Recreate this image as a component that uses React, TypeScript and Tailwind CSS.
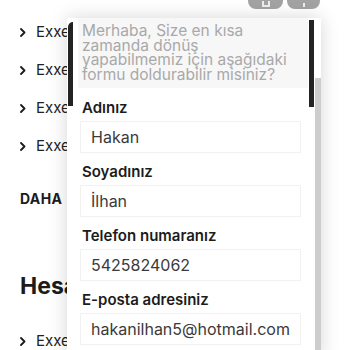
const menuItems = ['Exxen', 'Exxen', 'Exxen', 'Exxen'];

const fields = [
  { label: 'Adınız', value: 'Hakan' },
  { label: 'Soyadınız', value: 'İlhan' },
  { label: 'Telefon numaranız', value: '5425824062' },
  { label: 'E-posta adresiniz', value: 'hakanilhan5@hotmail.com' },
];

function Chevron() {
  return (
    <svg width="6" height="9" viewBox="0 0 6 9" fill="none" className="mr-[10px]">
      <path d="M1 1l3.5 3.5L1 8" stroke="#1c1c1c" strokeWidth="1.8" strokeLinecap="round" strokeLinejoin="round" />
    </svg>
  );
}

function MenuRow({ text }: { text: string }) {
  return (
    <div className="flex items-center h-[38px] text-[15px] text-[#222]">
      <Chevron />
      <span>{text}</span>
    </div>
  );
}

function Field({ label, value }: { label: string; value: string }) {
  return (
    <div className="flex flex-col mb-[9px]">
      <div className="h-[20px] leading-[20px] px-[2px] text-[15px] font-semibold text-[#1c1c1c]">{label}</div>
      <div className="mt-[3px] h-[32px] flex items-center pl-[10px] border border-[#f1f1f1] text-[16px] text-[#3a3a3a]">
        {value}
      </div>
    </div>
  );
}

export default function App() {
  return (
    <div className="relative w-[350px] h-[350px] overflow-hidden bg-white font-['Inter','Liberation_Sans',sans-serif]">
      <div className="flex flex-col pl-[20px] pt-[13px]">
        {menuItems.map((t, i) => (
          <MenuRow key={i} text={t} />
        ))}
        <div className="mt-[23px] text-[14px] font-bold tracking-wide text-[#1c1c1c]">DAHA</div>
        <div className="mt-[60px] text-[23px] font-bold text-[#1c1c1c]">Hesap</div>
        <div className="mt-[19px]">
          <MenuRow text="Exxen" />
        </div>
      </div>

      <div className="absolute top-[-12px] left-[248px] flex gap-[4px]">
        <div className="w-[35px] h-[21px] rounded-[8px] bg-[#a3a3a3] flex justify-center">
          <div className="w-[8px] h-[6px] mt-[13px] border-x-2 border-b-2 border-white/80" />
        </div>
        <div className="w-[33px] h-[21px] rounded-[8px] bg-[#a3a3a3] flex justify-center">
          <div className="w-[2px] h-[4px] mt-[15px] bg-white/80" />
        </div>
      </div>

      <div className="absolute left-[67px] top-[18px] w-[254px] h-[340px] bg-white shadow-[0_0_18px_rgba(0,0,0,0.16)] flex">
        <div className="relative flex-1 flex flex-col">
          <div className="ml-[11px] mr-[7px] h-[70px] bg-[#f7f7f7] pl-[4px] pr-[10px] pt-[6px] text-[15.5px] leading-[14.5px] text-[#a9a9a9]">
            Merhaba, Size en kısa zamanda dönüş yapabilmemiz için aşağıdaki formu doldurabilir misiniz?
          </div>
          <div className="mt-[10px] ml-[13px] mr-[14px] flex flex-col">
            {fields.map((f) => (
              <Field key={f.label} label={f.label} value={f.value} />
            ))}
          </div>
          <div className="absolute left-[1px] top-[4px] w-[5px] h-[84px] rounded-tl-[6px] bg-[#232323]" />
          <div className="absolute right-[1px] top-[2px] w-[5px] h-[87px] bg-[#232323]" />
        </div>
        <div className="w-[6px] flex flex-col">
          <div className="h-[60px]" />
          <div className="flex-1 bg-[#cdcdcd]" />
        </div>
      </div>
    </div>
  );
}
